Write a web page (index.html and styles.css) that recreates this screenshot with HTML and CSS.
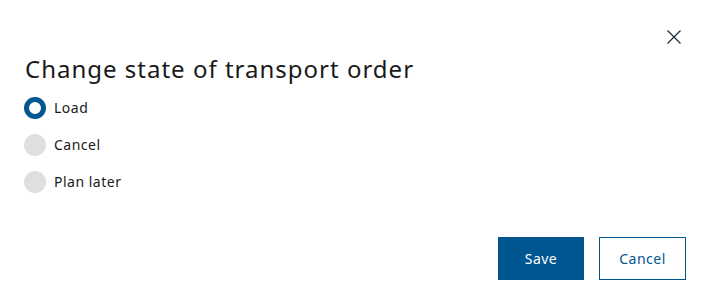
FILE: index.html
```html
<!DOCTYPE html>
<html lang="en">
  <head>
    <meta charset="UTF-8" />
    <meta name="viewport" content="width=device-width, initial-scale=1.0" />
    <title>Change state</title>
    <link rel="stylesheet" href="styles.css">
  </head>
  <body>
    <div class="dialog">
      <div class="dialog-head">
        <button class="close" aria-label="Close">
          <svg width="14" height="14" viewBox="0 0 14 14">
            <path d="M0.5 0.5 L13.5 13.5 M13.5 0.5 L0.5 13.5" stroke="#1d2a3a" stroke-width="1.2" fill="none" />
          </svg>
        </button>
      </div>

      <h1 class="title">Change state of transport order</h1>

      <form class="options">
        <label class="option">
          <input type="radio" name="state" value="load" checked />
          <span class="dot"></span>
          <span class="text">Load</span>
        </label>
        <label class="option">
          <input type="radio" name="state" value="cancel" />
          <span class="dot"></span>
          <span class="text">Cancel</span>
        </label>
        <label class="option">
          <input type="radio" name="state" value="later" />
          <span class="dot"></span>
          <span class="text">Plan later</span>
        </label>
      </form>

      <div class="actions">
        <button class="btn btn-primary">Save</button>
        <button class="btn btn-secondary">Cancel</button>
      </div>
    </div>
  </body>
</html>
```

FILE: styles.css
```css
body {
  margin: 0;
  background: #ffffff;
  font-family: "Noto Sans", "Liberation Sans", sans-serif;
  color: #1a1a1a;
}
.dialog {
  padding: 0 24px 0 24px;
}
.dialog-head {
  display: flex;
  justify-content: flex-end;
  padding-top: 27px;
  padding-right: 2px;
}
.close {
  width: 20px;
  height: 20px;
  padding: 0;
  border: none;
  background: none;
  display: flex;
  align-items: center;
  justify-content: center;
  cursor: pointer;
}
.title {
  margin: 6px 0 0 0;
  padding-left: 1px;
  font-size: 24px;
  line-height: 32px;
  font-weight: 400;
  letter-spacing: 1px;
  color: #1a1a1a;
}
.options {
  margin-top: 4px;
  display: flex;
  flex-direction: column;
}
.option {
  display: flex;
  align-items: center;
  gap: 8px;
  height: 37px;
  font-size: 14px;
  letter-spacing: 0.5px;
  cursor: pointer;
}
.option input {
  display: none;
}
.dot {
  width: 22px;
  height: 22px;
  border-radius: 50%;
  background: #dfdfe0;
  box-sizing: border-box;
}
.option input:checked + .dot {
  background: #ffffff;
  border: 5px solid #005691;
}
.actions {
  display: flex;
  justify-content: flex-end;
  gap: 15px;
  margin-top: 37px;
}
.btn {
  width: 86px;
  height: 43px;
  font-family: inherit;
  font-size: 14px;
  letter-spacing: 0.5px;
  cursor: pointer;
  box-sizing: border-box;
}
.btn-primary {
  background: #005691;
  color: #ffffff;
  border: none;
}
.btn-secondary {
  width: 87px;
  background: #ffffff;
  color: #005691;
  border: 1px solid #005691;
}
```
